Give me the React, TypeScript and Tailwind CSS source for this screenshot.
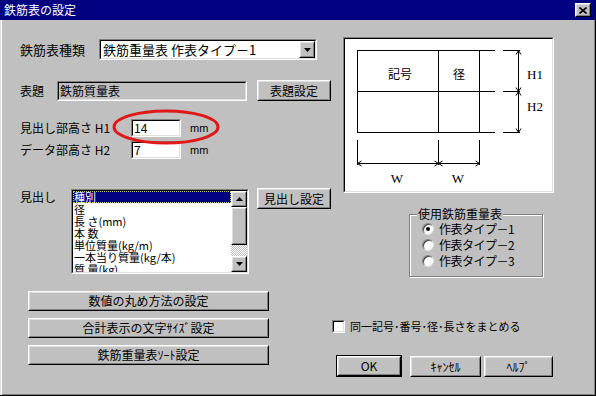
import React from "react";

const Btn = ({ className = "", children }: { className?: string; children?: React.ReactNode }) => (
  <div className={"border border-t-white border-l-white border-r-black border-b-black bg-[#c0c0c0] " + className}>
    <div className="w-full h-full border border-t-[#dfdfdf] border-l-[#dfdfdf] border-r-[#808080] border-b-[#808080] flex items-center justify-center text-[12px] leading-none text-black whitespace-nowrap">
      {children}
    </div>
  </div>
);

const Sunken = ({ className = "", inner = "", children }: { className?: string; inner?: string; children?: React.ReactNode }) => (
  <div className={"border border-t-[#808080] border-l-[#808080] border-r-white border-b-white " + className}>
    <div className={"w-full h-full border border-t-black border-l-black border-r-[#dfdfdf] border-b-[#dfdfdf] " + inner}>{children}</div>
  </div>
);

const Down = () => (
  <svg width="7" height="4" viewBox="0 0 7 4"><path d="M0 0H7L3.5 4Z" fill="#000" /></svg>
);
const Up = () => (
  <svg width="7" height="4" viewBox="0 0 7 4"><path d="M0 4H7L3.5 0Z" fill="#000" /></svg>
);

const Radio = ({ checked, label }: { checked?: boolean; label: string }) => (
  <div className="h-[16px] flex items-center gap-[5px]">
    <div className="w-[12px] h-[12px] rounded-full bg-white border border-t-[#808080] border-l-[#808080] border-r-[#dfdfdf] border-b-[#dfdfdf] flex items-center justify-center shadow-[inset_1px_1px_#404040]">
      {checked && <div className="w-[4px] h-[4px] rounded-full bg-black" />}
    </div>
    <span className="text-[12px] leading-none tracking-[-0.5px]">{label}</span>
  </div>
);

const items = ["種別", "径", "長 さ(mm)", "本 数", "単位質量(kg/m)", "一本当り質量(kg/本)", "質 量(kg)"];

export default function App() {
  return (
    <div className="relative w-[596px] h-[396px] bg-[#c0c0c0] flex flex-col overflow-hidden text-black border-r border-b border-r-black border-b-black font-['Noto_Sans_CJK_JP','Liberation_Sans',sans-serif]">
      {/* title bar */}
      <div className="h-[20px] shrink-0 bg-[#000080] flex items-center pl-[4px] pr-[4px]">
        <span className="flex-1 text-white text-[12px] leading-none">鉄筋表の設定</span>
        <Btn className="w-[16px] h-[14px]">
          <svg width="8" height="7" viewBox="0 0 8 7">
            <path d="M0.5 0.5L7.5 6.5M7.5 0.5L0.5 6.5" stroke="#000" strokeWidth="1.6" />
          </svg>
        </Btn>
      </div>

      {/* body */}
      <div className="flex flex-1 border-l border-l-[#dfdfdf] shadow-[inset_1px_0_white,inset_-1px_-1px_#808080]">
        {/* left column */}
        <div className="w-[331px] shrink-0 flex flex-col pl-[19px]">
          <div className="mt-[19px] h-[21px] flex items-center">
            <span className="w-[79px] text-[13px] leading-none">鉄筋表種類</span>
            <Sunken className="w-[218px] h-[21px] bg-white" inner="flex items-center">
              <span className="flex-1 pl-[2px] text-[13px] leading-none">鉄筋重量表 作表タイプ－1</span>
              <Btn className="w-[16px] h-[17px]"><Down /></Btn>
            </Sunken>
          </div>

          <div className="mt-[20px] h-[21px] flex items-center">
            <span className="w-[37px] text-[12px] leading-none">表題</span>
            <Sunken className="w-[190px] h-[20px] bg-[#c0c0c0]" inner="flex items-center">
              <span className="pl-[1px] text-[12px] leading-none">鉄筋質量表</span>
            </Sunken>
            <Btn className="ml-[10px] w-[74px] h-[21px]">表題設定</Btn>
          </div>

          <div className="mt-[18px] h-[18px] flex items-center">
            <span className="w-[111px] text-[12px] leading-none">見出し部高さ H1</span>
            <Sunken className="w-[50px] h-[18px] bg-white" inner="flex items-center">
              <span className="pl-[1px] text-[12px] leading-none">14</span>
            </Sunken>
            <span className="ml-[9px] text-[11px] leading-none font-['Liberation_Sans',sans-serif]">mm</span>
          </div>
          <div className="mt-[4px] h-[18px] flex items-center">
            <span className="w-[111px] text-[12px] leading-none">データ部高さ H2</span>
            <Sunken className="w-[50px] h-[18px] bg-white" inner="flex items-center">
              <span className="pl-[1px] text-[12px] leading-none">7</span>
            </Sunken>
            <span className="ml-[9px] text-[11px] leading-none font-['Liberation_Sans',sans-serif]">mm</span>
          </div>

          <div className="mt-[29px] flex items-start">
            <span className="w-[51px] pt-[3px] text-[12px] leading-none">見出し</span>
            <Sunken className="mt-[1px] w-[178px] h-[85px] bg-white" inner="flex overflow-hidden">
              <div className="flex-1 flex flex-col overflow-hidden">
                {items.map((t, i) => (
                  <div
                    key={t}
                    className={
                      "h-[12px] shrink-0 pl-[1px] text-[11px] leading-[12px] whitespace-nowrap " +
                      (i === 0 ? "bg-[#000080] text-white outline-1 outline-dotted outline-offset-[-1px] outline-[#c8c870]" : "")
                    }
                  >
                    {t}
                  </div>
                ))}
              </div>
              <div className="w-[16px] shrink-0 flex flex-col">
                <Btn className="w-[16px] h-[16px] shrink-0"><Up /></Btn>
                <Btn className="w-[16px] h-[38px] shrink-0" />
                <div className="flex-1 bg-[repeating-conic-gradient(#c0c0c0_0%_25%,#ffffff_0%_50%)] bg-[length:2px_2px]" />
                <Btn className="w-[16px] h-[16px] shrink-0"><Down /></Btn>
              </div>
            </Sunken>
            <Btn className="ml-[8px] w-[74px] h-[21px]">見出し設定</Btn>
          </div>

          <div className="mt-[17px] ml-[8px] flex flex-col gap-[7px]">
            <Btn className="w-[241px] h-[20px]">数値の丸め方法の設定</Btn>
            <Btn className="w-[241px] h-[20px]">合計表示の文字ｻｲｽﾞ設定</Btn>
            <Btn className="w-[241px] h-[20px]">鉄筋重量表ｿｰﾄ設定</Btn>
          </div>
        </div>

        {/* right column */}
        <div className="flex flex-col">
          <Sunken className="mt-[17px] ml-[11px] w-[211px] h-[156px] bg-white">
            <svg width="207" height="152" viewBox="345 39 207 152" className="block">
              <g stroke="#000" strokeWidth="1" fill="none">
                <path d="M357 50.5H495M503 50.5H520M357 91.5H495M503 91.5H520M357 132.5H495M503 132.5H520" />
                <path d="M357.5 50V133M438.5 50V133M479.5 50V133" />
                <path d="M518.5 50V132" />
                <path d="M516 54.5L518.5 50.5L521 54.5M516 87.5L518.5 91.5L521 87.5M516 95.5L518.5 91.5L521 95.5M516 128.5L518.5 132.5L521 128.5" />
                <path d="M357.5 140V165M438.5 140V165M479.5 140V165" />
                <path d="M357 163.5H480" />
                <path d="M361.5 161L357.5 163.5L361.5 166M434.5 161L438.5 163.5L434.5 166M442.5 161L438.5 163.5L442.5 166M475.5 161L479.5 163.5L475.5 166" />
              </g>
              <g fill="#000" fontSize="12" fontFamily="'Noto Sans CJK JP', sans-serif" textAnchor="middle">
                <text x="400" y="79">記号</text>
                <text x="459" y="79">径</text>
              </g>
              <g fill="#000" fontSize="13" fontFamily="'Liberation Serif', serif">
                <text x="527" y="79">H1</text>
                <text x="527" y="111">H2</text>
                <text x="397" y="183" textAnchor="middle">W</text>
                <text x="458" y="183" textAnchor="middle">W</text>
              </g>
            </svg>
          </Sunken>

          <div className="relative mt-[21px] ml-[77px] w-[134px] h-[63px] border border-[#808080] shadow-[1px_1px_white,inset_1px_1px_white]">
            <span className="absolute left-[7px] top-[-9px] bg-[#c0c0c0] px-[1px] text-[12px] leading-[16px]">使用鉄筋重量表</span>
            <div className="flex flex-col pt-[6px] pl-[12px]">
              <Radio checked label="作表タイプ－1" />
              <Radio label="作表タイプ－2" />
              <Radio label="作表タイプ－3" />
            </div>
          </div>

          <div className="mt-[43px] h-[13px] flex items-center gap-[5px]">
            <Sunken className="w-[13px] h-[13px] bg-white" />
            <span className="text-[11px] leading-none whitespace-nowrap">同一記号･番号･径･長さをまとめる</span>
          </div>

          <div className="mt-[22px] ml-[4px] flex items-start">
            <div className="w-[66px] h-[22px] border border-black">
              <Btn className="w-full h-full">OK</Btn>
            </div>
            <Btn className="ml-[8px] mt-[1px] w-[71px] h-[21px]">ｷｬﾝｾﾙ</Btn>
            <Btn className="ml-[3px] mt-[1px] w-[69px] h-[21px]">ﾍﾙﾌﾟ</Btn>
          </div>
        </div>
      </div>

      {/* red annotation ellipse */}
      <svg className="absolute left-0 top-0 pointer-events-none" width="596" height="396">
        <ellipse cx="166" cy="127" rx="52" ry="16" fill="none" stroke="#e01818" strokeWidth="3" />
      </svg>
    </div>
  );
}
